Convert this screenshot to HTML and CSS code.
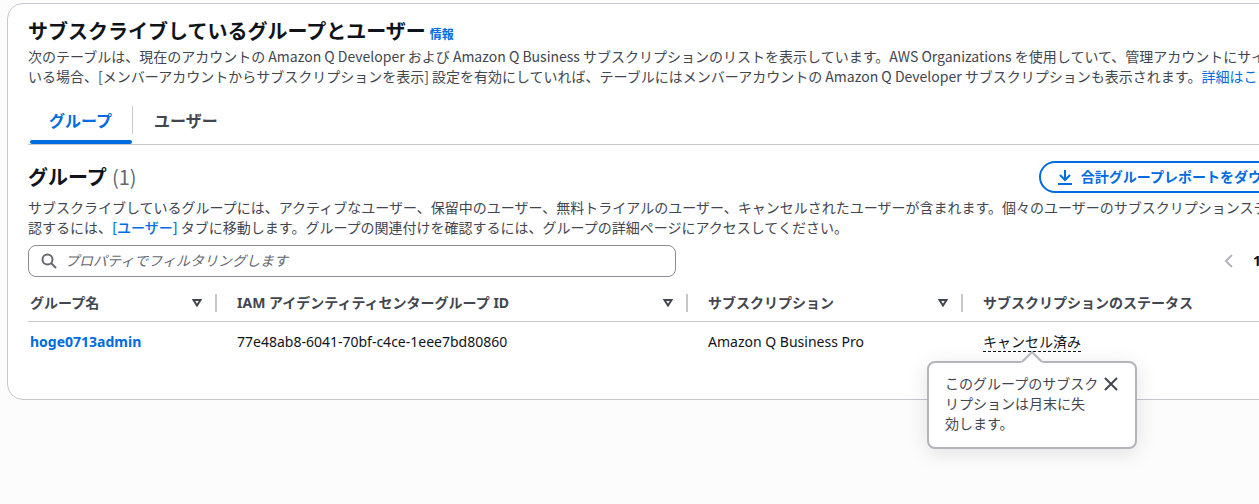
FILE: index.html
```html
<!DOCTYPE html>
<html lang="ja">
<head>
  <meta charset="UTF-8">
  <meta name="viewport" content="width=device-width, initial-scale=1.0">
  <title>サブスクリプション</title>
  <link rel="stylesheet" href="styles.css">
</head>
<body>
  <main class="panel">
    <header class="panel-header">
      <div class="title-row">
        <h1>サブスクライブしているグループとユーザー</h1>
        <a href="#" class="info">情報</a>
      </div>
      <p class="description">次のテーブルは、現在のアカウントの Amazon Q Developer および Amazon Q Business サブスクリプションのリストを表示しています。AWS Organizations を使用していて、管理アカウントにサイン<br>いる場合、[メンバーアカウントからサブスクリプションを表示] 設定を有効にしていれば、テーブルにはメンバーアカウントの Amazon Q Developer サブスクリプションも表示されます。<a href="#">詳細はこちら</a></p>
    </header>

    <div class="tabs" role="tablist">
      <button class="tab active" role="tab" aria-selected="true">グループ</button>
      <button class="tab" role="tab" aria-selected="false">ユーザー</button>
    </div>

    <section class="groups">
      <div class="groups-header">
        <h2>グループ <span class="count">(1)</span></h2>
        <button class="download">
          <svg width="16" height="16" viewBox="0 0 16 16" fill="none" stroke="currentColor" stroke-width="2">
            <path d="M8 1v9M3 6l5 5 5-5M1 15h14"/>
          </svg>
          合計グループレポートをダウンロード
        </button>
      </div>
      <p class="description">サブスクライブしているグループには、アクティブなユーザー、保留中のユーザー、無料トライアルのユーザー、キャンセルされたユーザーが含まれます。個々のユーザーのサブスクリプションステ<br>認するには、<a href="#" class="tab-link">[ユーザー]</a> タブに移動します。グループの関連付けを確認するには、グループの詳細ページにアクセスしてください。</p>

      <div class="toolbar">
        <label class="filter">
          <svg width="16" height="16" viewBox="0 0 16 16" fill="none" stroke="currentColor" stroke-width="2">
            <circle cx="6.5" cy="6.5" r="5"/>
            <path d="M10.2 10.2L15 15"/>
          </svg>
          <input type="text" placeholder="プロパティでフィルタリングします" aria-label="プロパティでフィルタリングします">
        </label>
        <nav class="pagination">
          <button class="page-arrow" aria-label="前のページ" disabled>
            <svg width="16" height="16" viewBox="0 0 16 16" fill="none" stroke="currentColor" stroke-width="2"><path d="M11 2L5 8l6 6"/></svg>
          </button>
          <button class="page-number">1</button>
          <button class="page-arrow" aria-label="次のページ" disabled>
            <svg width="16" height="16" viewBox="0 0 16 16" fill="none" stroke="currentColor" stroke-width="2"><path d="M5 2l6 6-6 6"/></svg>
          </button>
        </nav>
      </div>

      <table>
        <colgroup>
          <col class="col-name">
          <col class="col-id">
          <col class="col-plan">
          <col>
        </colgroup>
        <thead>
          <tr>
            <th><div class="th">グループ名 <svg width="10" height="8" viewBox="0 0 10 8" fill="none" stroke="currentColor" stroke-width="2"><path d="M1.5 1h7L5 6.5z"/></svg></div></th>
            <th><div class="th">IAM アイデンティティセンターグループ ID <svg width="10" height="8" viewBox="0 0 10 8" fill="none" stroke="currentColor" stroke-width="2"><path d="M1.5 1h7L5 6.5z"/></svg></div></th>
            <th><div class="th">サブスクリプション <svg width="10" height="8" viewBox="0 0 10 8" fill="none" stroke="currentColor" stroke-width="2"><path d="M1.5 1h7L5 6.5z"/></svg></div></th>
            <th><div class="th">サブスクリプションのステータス</div></th>
          </tr>
        </thead>
        <tbody>
          <tr>
            <td><a href="#" class="group-link">hoge0713admin</a></td>
            <td>77e48ab8-6041-70bf-c4ce-1eee7bd80860</td>
            <td>Amazon Q Business Pro</td>
            <td>
              <div class="status">
                <button class="status-label">キャンセル済み</button>
                <div class="popover" role="dialog">
                  <svg class="popover-arrow" width="22" height="12" viewBox="0 0 22 12">
                    <path d="M0 12L1 11 11 1l10 10 1 1z" fill="#fff"/>
                    <path d="M1 11L11 1l10 10" fill="none" stroke="#b4b4bb" stroke-width="2"/>
                  </svg>
                  <p>このグループのサブスク<br>リプションは月末に失<br>効します。</p>
                  <button class="close" aria-label="閉じる">
                    <svg width="16" height="16" viewBox="0 0 16 16" fill="none" stroke="currentColor" stroke-width="2"><path d="M2 2l12 12M14 2L2 14"/></svg>
                  </button>
                </div>
              </div>
            </td>
          </tr>
        </tbody>
      </table>
    </section>
  </main>
</body>
</html>
```
FILE: styles.css
```css
* {
  box-sizing: border-box;
}

body {
  min-height: 100vh;
  margin: 0;
  padding: 3px 0 0 7px;
  background-color: #fcfcfd;
  color: #0f141a;
  font-family: "Noto Sans", "Noto Sans CJK JP", sans-serif;
  font-size: 14px;
  line-height: 20px;
  overflow: hidden;
}

h1, h2, p {
  margin: 0;
}

h1, h2 {
  font-size: 20px;
  line-height: 24px;
}

a {
  color: #006ce0;
  text-decoration: none;
}

button {
  padding: 0;
  border: none;
  background: none;
  color: inherit;
  font: inherit;
  cursor: pointer;
}

svg {
  display: block;
  flex: none;
}

/* the panel is wider than the window and runs off its right side */
.panel {
  margin-right: -98px;
  padding: 16px 20px 37px;
  background-color: #fff;
  border: 1px solid #c6c6cd;
  border-radius: 16px;
}

.title-row {
  display: flex;
  align-items: baseline;
  gap: 4px;
  margin-bottom: 1px;
}

.info {
  font-size: 12px;
  font-weight: 700;
}

.description {
  color: #424650;
  font-family: "Noto Sans CJK JP", sans-serif;
  white-space: nowrap;
}

.tab-link {
  font-weight: 500;
}

.group-link {
  font-weight: 700;
}

.tabs {
  display: flex;
  margin-top: 16px;
  border-bottom: 1px solid #c6c6cd;
}

.tab {
  position: relative;
  padding: 8px 21px 12px;
  height: 42px;
  color: #424650;
  font-size: 16px;
  font-weight: 700;
}

.tab.active {
  color: #006ce0;
}

.tab.active::before {
  content: "";
  position: absolute;
  top: 4px;
  right: 0;
  width: 1px;
  height: 28px;
  background-color: #c6c6cd;
}

.tab.active::after {
  content: "";
  position: absolute;
  left: 2px;
  right: 1px;
  bottom: 0;
  height: 4px;
  border-radius: 2px;
  background-color: #006ce0;
}

.groups {
  padding-top: 16px;
}

.groups-header {
  display: flex;
  align-items: center;
  justify-content: space-between;
  margin-bottom: 4px;
}

.count {
  color: #656871;
  font-family: "Noto Sans CJK JP", sans-serif;
  font-weight: 400;
}

.download {
  display: flex;
  align-items: center;
  gap: 8px;
  height: 32px;
  padding: 0 16px;
  border: 2px solid #006ce0;
  border-radius: 16px;
  color: #006ce0;
  font-weight: 700;
}

.toolbar {
  display: flex;
  align-items: center;
  justify-content: space-between;
  margin-top: 8px;
}

.filter {
  display: flex;
  align-items: center;
  gap: 8px;
  width: 648px;
  height: 32px;
  padding: 0 12px;
  border: 1px solid #8c8c94;
  border-radius: 8px;
  color: #656871;
}

.filter input {
  flex: 1;
  padding: 0;
  border: none;
  outline: none;
  background: none;
  font: inherit;
}

.filter input::placeholder {
  color: #656871;
  font-style: italic;
}

.pagination {
  display: flex;
  align-items: center;
  gap: 16px;
  padding-right: 43px;
}

.page-arrow {
  color: #b4b4bb;
}

.page-number {
  font-weight: 700;
}

table {
  width: 100%;
  margin-top: 8px;
  border-collapse: collapse;
  table-layout: fixed;
}

.col-name {
  width: 189px;
}

.col-id {
  width: 471px;
}

.col-plan {
  width: 275px;
}

th {
  padding: 9px 0;
  border-bottom: 1px solid #c6c6cd;
  color: #424650;
  text-align: left;
}

.th {
  display: flex;
  align-items: center;
  justify-content: space-between;
  height: 18px;
  padding: 0 13px 0 20px;
  border-right: 2px solid #c6c6cd;
}

th:last-child .th {
  border-right: none;
}

td {
  padding: 10px 20px;
}

th:first-child .th,
td:first-child {
  padding-left: 2px;
}

.status {
  position: relative;
  display: inline-block;
  vertical-align: top;
}

.status-label {
  display: block;
  height: 20px;
  border-bottom: 1px dashed #0f141a;
}

.popover {
  position: absolute;
  top: 29px;
  left: 50%;
  display: flex;
  justify-content: space-between;
  align-items: flex-start;
  width: 210px;
  padding: 11px 16px 13px;
  background-color: #fff;
  border: 2px solid #b4b4bb;
  border-radius: 8px;
  box-shadow: 0 4px 20px 1px rgba(0, 7, 22, 0.1);
  color: #424650;
  white-space: nowrap;
  transform: translateX(-50%);
}

.popover-arrow {
  position: absolute;
  top: -12px;
  left: 50%;
  transform: translateX(-50%);
}

.close {
  padding: 2px 0;
}
```
